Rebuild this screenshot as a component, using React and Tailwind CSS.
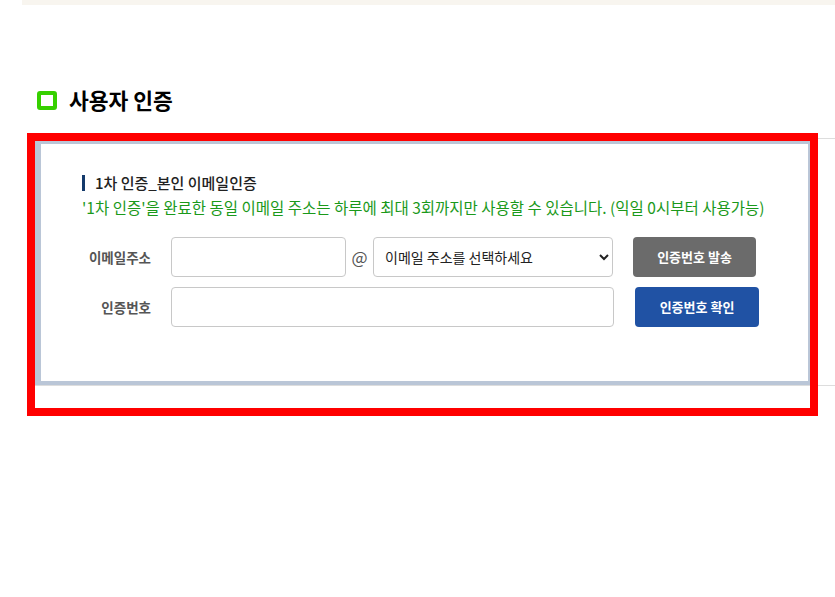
export default function App() {
  const font = { fontFamily: '"Noto Sans CJK KR", "Noto Sans", sans-serif' };
  return (
    <div className="relative w-[835px] h-[597px] bg-white overflow-hidden font-['Noto_Sans_CJK_KR',sans-serif]">
      {/* top strip */}
      <div className="ml-[22px] h-[5px] bg-[#f8f5ef]" />

      {/* heading */}
      <div className="mt-[85px] flex items-center h-[20px] pl-[37px]">
        <span className="w-[20px] h-[19px] border-[4px] border-[#36d000] rounded-[3px]" />
        <h2 className="ml-[12px] text-[21.5px] font-bold text-black leading-none">
          사용자 인증
        </h2>
      </div>

      {/* section */}
      <div className="mt-[28px] ml-[27px] border-y border-[#dddddd] pt-[1px]">
        <div className="ml-[6px] w-[779px] bg-white border-[#bac6d7] border-t-[4px] border-l-[8px] border-r-[4px] border-b-[4px] pl-[41px] pt-[29px] pb-[54px]">
          <div className="flex items-center h-[20px]">
            <span className="w-[3px] h-[16px] bg-[#143a6b]" />
            <p className="ml-[10px] text-[15px] text-[#222] leading-[20px] font-medium">
              1차 인증_본인 이메일인증
            </p>
          </div>
          <p className="mt-[4px] text-[15.5px] leading-[20px] text-[#1a991a]">
            '1차 인증'을 완료한 동일 이메일 주소는 하루에 최대 3회까지만 사용할 수 있습니다. (익일 0시부터 사용가능)
          </p>

          <div className="mt-[20px] flex items-center h-[40px]">
            <label className="w-[69px] text-right text-[13.5px] font-bold text-[#555]">이메일주소</label>
            <input className="ml-[20px] w-[175px] h-[40px] border border-[#c8c8c8] rounded-[4px] bg-white" />
            <span className="w-[27px] text-center text-[17px] text-[#555]">@</span>
            <select
              className="w-[240px] h-[40px] border border-[#c8c8c8] rounded-[4px] bg-white pl-[7px] pr-[4px] text-[14px] text-[#222]"
              style={font}
              defaultValue=""
            >
              <option value="">이메일 주소를 선택하세요</option>
            </select>
            <button className="ml-[20px] w-[123px] h-[40px] rounded-[4px] bg-[#6b6b6b] text-white text-[13px] font-bold">
              인증번호 발송
            </button>
          </div>

          <div className="mt-[10px] flex items-center h-[40px]">
            <label className="w-[69px] text-right text-[13.5px] font-bold text-[#555]">인증번호</label>
            <input className="ml-[20px] w-[443px] h-[40px] border border-[#c8c8c8] rounded-[4px] bg-white" />
            <button className="ml-[21px] w-[124px] h-[40px] rounded-[4px] bg-[#2052a4] text-white text-[13px] font-bold">
              인증번호 확인
            </button>
          </div>
        </div>
      </div>

      {/* highlight overlay */}
      <div className="absolute left-[27px] top-[133px] w-[791px] h-[283px] border-[8px] border-[#ff0000] pointer-events-none" />
    </div>
  );
}
